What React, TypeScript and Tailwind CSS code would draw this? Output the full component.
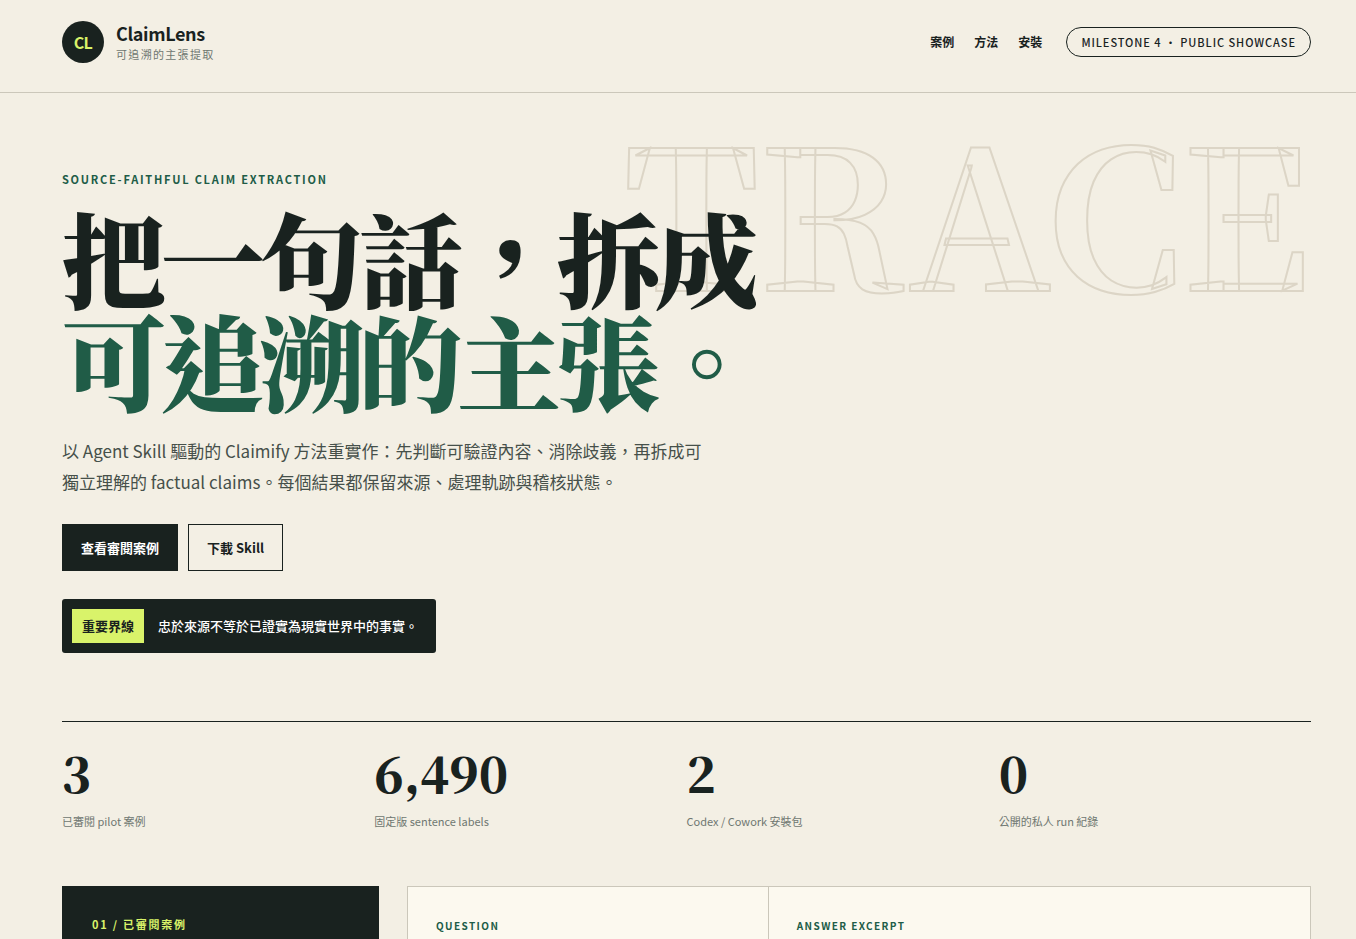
import React from 'react';

interface Stat {
  value: string;
  label: string;
}

const navLinks = [
  { href: '#cases', label: '案例' },
  { href: '#method', label: '方法' },
  { href: '#install', label: '安裝' },
];

const stats: Stat[] = [
  { value: '3', label: '已審閱 pilot 案例' },
  { value: '6,490', label: '固定版 sentence labels' },
  { value: '2', label: 'Codex / Cowork 安裝包' },
  { value: '0', label: '公開的私人 run 紀錄' },
];

const Header: React.FC = () => (
  <header className="flex items-center justify-between border-b border-[#cbc7ba] pt-[21px] pr-[45px] pb-[29px] pl-[62px]">
    <a href="#top" className="flex items-center gap-3">
      <span className="flex h-[42px] w-[42px] items-center justify-center rounded-full bg-[#19221f] text-base font-bold tracking-[-0.04em] text-[#d9f36a]">
        CL
      </span>
      <span className="flex flex-col">
        <strong className="text-lg leading-[25px] font-bold tracking-[-0.02em]">ClaimLens</strong>
        <small className="text-[11px] leading-[17px] tracking-[0.12em] text-[#6f7771]">可追溯的主張提取</small>
      </span>
    </a>

    <div className="flex items-center gap-6">
      <nav className="flex gap-5 text-xs font-bold">
        {navLinks.map((link) => (
          <a key={link.href} href={link.href}>
            {link.label}
          </a>
        ))}
      </nav>
      <span className="rounded-full border border-[#19221f] px-[14px] py-[5px] text-[11px] leading-[18px] font-medium tracking-[0.085em]">
        MILESTONE 4 ・ PUBLIC SHOWCASE
      </span>
    </div>
  </header>
);

const Hero: React.FC = () => (
  <section className="relative pt-[78px] pr-[45px] pb-[68px] pl-[62px]">
    {/* Outlined backdrop word */}
    <div
      aria-hidden="true"
      className="pointer-events-none absolute top-[19px] right-[45px] font-['Noto_Serif_TC','Noto_Serif_CJK_TC',serif] text-[192px] leading-[193px] font-extrabold text-transparent [-webkit-text-stroke:2px_#dcd5c6]"
    >
      TRACE
    </div>

    <div className="relative">
      <p className="text-[11px] leading-4 font-bold tracking-[0.16em] text-[#205c47]">
        SOURCE-FAITHFUL CLAIM EXTRACTION
      </p>
      <h1 className="mt-[18px] font-['Noto_Serif_TC','Noto_Serif_CJK_TC',serif] text-[104px] leading-[103px] font-black tracking-[-0.05em] whitespace-nowrap">
        把一句話，拆成
        <br />
        <span className="text-[#205c47]">可追溯的主張。</span>
      </h1>
      <p className="mt-6 max-w-[650px] text-[17px] leading-[31px] text-[#46504a]">
        以 Agent Skill 驅動的 Claimify 方法重實作：先判斷可驗證內容、消除歧義，再拆成可獨立理解的 factual
        claims。每個結果都保留來源、處理軌跡與稽核狀態。
      </p>

      <div className="mt-[27px] flex gap-[10px] text-[13px] leading-[19px] font-bold">
        <a href="#cases" className="border border-[#19221f] bg-[#19221f] px-[18px] py-[13px] text-white">
          查看審閱案例
        </a>
        <a href="#install" className="border border-[#19221f] px-[18px] py-[13px]">
          下載 Skill
        </a>
      </div>

      <div className="mt-7 flex w-fit items-center gap-[14px] rounded-[3px] bg-[#19221f] py-[10px] pr-[18px] pl-[10px] text-[13px] leading-[18px] text-white">
        <strong className="bg-[#d9f36a] px-[10px] py-2 font-bold text-[#19221f]">重要界線</strong>
        <span className="font-medium">忠於來源不等於已證實為現實世界中的事實。</span>
      </div>
    </div>
  </section>
);

const Stats: React.FC = () => (
  <section className="mr-[45px] ml-[62px] grid grid-cols-4 border-t border-[#19221f] pt-[23px] pb-[55px]">
    {stats.map((stat) => (
      <div key={stat.label}>
        <strong className="block font-['Noto_Serif_TC','Noto_Serif_CJK_TC',serif] text-5xl leading-[56px] font-black">
          {stat.value}
        </strong>
        <span className="mt-[10px] block text-[11px] leading-5 text-[#6f7771]">{stat.label}</span>
      </div>
    ))}
  </section>
);

const Cases: React.FC = () => (
  <section
    id="cases"
    className="mr-[45px] ml-[62px] grid flex-1 grid-cols-[317px_1fr] gap-7 text-[11px] leading-4 font-bold"
  >
    <aside className="bg-[#19221f] px-[30px] pt-[30px] tracking-[0.16em] text-[#d9f36a]">01 / 已審閱案例</aside>
    <article className="grid grid-cols-[2fr_3fr] border border-b-0 border-[#cbc7ba] bg-[#fcf9ef] text-[10px] tracking-[0.14em] text-[#205c47]">
      <div className="border-r border-[#cbc7ba] px-7 pt-[31px]">QUESTION</div>
      <div className="px-7 pt-[31px]">ANSWER EXCERPT</div>
    </article>
  </section>
);

export default function App() {
  return (
    <div
      id="top"
      lang="zh-Hant"
      className="flex min-h-screen flex-col overflow-x-hidden bg-[#f3efe4] font-['Noto_Sans_CJK_TC',sans-serif] text-[#19221f]"
    >
      <Header />
      <Hero />
      <Stats />
      <Cases />
    </div>
  );
}
